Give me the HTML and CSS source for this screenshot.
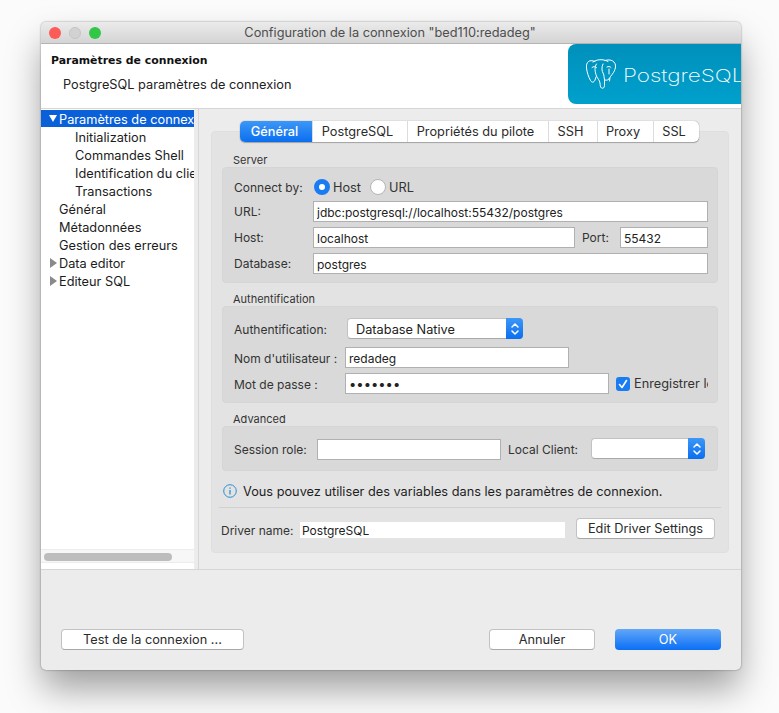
FILE: index.html
```html
<!DOCTYPE html>
<html lang="fr">
<head>
    <meta charset="UTF-8">
    <title>Configuration de la connexion</title>
    <link rel="stylesheet" href="styles.css">
</head>
<body>
    <div class="window">
        <div class="titlebar">
            <div class="lights">
                <span class="light red"></span>
                <span class="light gray"></span>
                <span class="light green"></span>
            </div>
            <div class="title">Configuration de la connexion "bed110:redadeg"</div>
        </div>

        <div class="header">
            <div class="header-text">
                <div class="header-title">Paramètres de connexion</div>
                <div class="header-sub">PostgreSQL paramètres de connexion</div>
            </div>
            <div class="logo">
                <svg class="elephant" width="31" height="31" viewBox="0 0 31 31" fill="none" stroke="#fff" stroke-width="1" stroke-linecap="round" stroke-linejoin="round">
                    <path d="M9 2.500C3 0 0 3 .5 9c.4 4 2 9 4 12.500 1.500 2.500 3.500 2 4.500-.5l1-3"/>
                    <path d="M7 3c3-2.500 10-3.500 15-.5"/>
                    <path d="M19 1.500C25-.5 30 2.500 29.500 8c-.4 4-3 7-5 9.500-1 1.500-.5 3-1 4.500"/>
                    <path d="M10.500 5C8 8 9 13 10.500 17c1 2.500 3 4 3.500 7 .3 2 0 4 1.500 5 1.800.8 3-.5 3-2.500V21c2.500.5 4.500 0 5-2"/>
                    <path d="M17 5c-1.500 3-1.500 7 .5 10 .5 1 .5 3 1 6"/>
                    <path d="M6 8.500c1.500-1.500 3.500-1 4.500 0M21 8c1.500-1 3-.5 4 .5M23 10v5"/>
                </svg>
                <span class="logo-text">PostgreSQL</span>
            </div>
        </div>

        <div class="main">
            <div class="tree-pane">
                <ul class="tree">
                    <li class="selected"><span class="arrow down"></span>Paramètres de connexion</li>
                    <li class="child">Initialization</li>
                    <li class="child">Commandes Shell</li>
                    <li class="child">Identification du client</li>
                    <li class="child">Transactions</li>
                    <li>Général</li>
                    <li>Métadonnées</li>
                    <li>Gestion des erreurs</li>
                    <li><span class="arrow right"></span>Data editor</li>
                    <li><span class="arrow right"></span>Editeur SQL</li>
                </ul>
                <div class="hscroll"><div class="hthumb"></div></div>
            </div>

            <div class="content">
                <div class="tabs">
                    <div class="tab active t1">Général</div>
                    <div class="tab t2">PostgreSQL</div>
                    <div class="tab t3">Propriétés du pilote</div>
                    <div class="tab t4">SSH</div>
                    <div class="tab t5">Proxy</div>
                    <div class="tab t6">SSL</div>
                </div>
                <div class="panel">
                    <div class="legend">Server</div>
                    <div class="group group-server">
                        <div class="row row-radio">
                            <label class="lab lab-server">Connect by:</label>
                            <span class="radio on"></span><span class="radio-text">Host</span>
                            <span class="radio"></span><span class="radio-text">URL</span>
                        </div>
                        <div class="row">
                            <label class="lab lab-server">URL:</label>
                            <input class="field grow" type="text" value="jdbc:postgresql://localhost:55432/postgres">
                        </div>
                        <div class="row">
                            <label class="lab lab-server">Host:</label>
                            <input class="field grow" type="text" value="localhost">
                            <label class="lab lab-port">Port:</label>
                            <input class="field port" type="text" value="55432">
                        </div>
                        <div class="row">
                            <label class="lab lab-server">Database:</label>
                            <input class="field grow" type="text" value="postgres">
                        </div>
                    </div>

                    <div class="legend">Authentification</div>
                    <div class="group group-auth">
                        <div class="row row-select">
                            <label class="lab lab-auth-type">Authentification:</label>
                            <div class="select select-auth">
                                <span class="select-value">Database Native</span>
                                <span class="stepper">
                                    <svg width="10" height="14" viewBox="0 0 10 14" fill="none" stroke="#fff" stroke-width="1.500" stroke-linecap="round" stroke-linejoin="round"><path d="M2 5l3-3 3 3M2 9l3 3 3-3"/></svg>
                                </span>
                            </div>
                        </div>
                        <div class="row">
                            <label class="lab lab-auth">Nom d'utilisateur :</label>
                            <input class="field user" type="text" value="redadeg">
                        </div>
                        <div class="row">
                            <label class="lab lab-auth">Mot de passe :</label>
                            <input class="field pass" type="password" value="redadeg">
                            <span class="check">
                                <svg width="14" height="14" viewBox="0 0 14 14" fill="none" stroke="#fff" stroke-width="1.600" stroke-linecap="round" stroke-linejoin="round"><path d="M3.500 7.500l2.500 3 4.500-7"/></svg>
                            </span>
                            <span class="check-text">Enregistrer le mot de passe</span>
                        </div>
                    </div>

                    <div class="legend">Advanced</div>
                    <div class="group group-adv">
                        <div class="row">
                            <label class="lab lab-role">Session role:</label>
                            <input class="field role" type="text">
                            <label class="lab lab-client">Local Client:</label>
                            <div class="select select-client">
                                <span class="select-value"></span>
                                <span class="stepper">
                                    <svg width="10" height="14" viewBox="0 0 10 14" fill="none" stroke="#fff" stroke-width="1.500" stroke-linecap="round" stroke-linejoin="round"><path d="M2 5l3-3 3 3M2 9l3 3 3-3"/></svg>
                                </span>
                            </div>
                        </div>
                    </div>

                    <div class="info">
                        <svg width="14" height="14" viewBox="0 0 14 14" fill="none" stroke="#2a8fd0"><circle cx="7" cy="7" r="6.300"/><path d="M7 6v4.500" stroke-width="1.300"/><path d="M7 3.500v1.200" stroke-width="1.300"/></svg>
                        <span>Vous pouvez utiliser des variables dans les paramètres de connexion.</span>
                    </div>

                    <div class="driver">
                        <span class="driver-label">Driver name:</span>
                        <span class="driver-name">PostgreSQL</span>
                        <button class="btn btn-driver" type="button">Edit Driver Settings</button>
                    </div>
                </div>
            </div>
        </div>

        <div class="footer">
            <button class="btn btn-test" type="button">Test de la connexion ...</button>
            <button class="btn btn-cancel" type="button">Annuler</button>
            <button class="btn btn-ok" type="button">OK</button>
        </div>
    </div>
</body>
</html>
```

FILE: styles.css
```css
* {
    box-sizing: border-box;
}

html, body {
    height: 100%;
}

body {
    margin: 0;
    padding: 22px 38px 0 41px;
    background-color: #fbfbfb;
    font-family: Inter, "Liberation Sans", sans-serif;
    font-size: 12.750px;
    color: #2b2b2b;
    overflow: hidden;
}

.window {
    width: 700px;
    height: 648px;
    background-color: #ececec;
    border-radius: 5px;
    box-shadow: 0 20px 36px -2px rgba(0, 0, 0, 0.38), 0 0 2px rgba(0, 0, 0, 0.45);
    display: flex;
    flex-direction: column;
    overflow: hidden;
}

/* title bar */
.titlebar {
    height: 22px;
    flex: none;
    display: flex;
    align-items: center;
    background: linear-gradient(#ebebeb, #d4d4d4);
    border-bottom: 1px solid #b4b4b4;
}

.lights {
    display: flex;
    gap: 8px;
    padding-left: 8px;
}

.light {
    width: 12px;
    height: 12px;
    border-radius: 50%;
}

.red {
    background-color: #fc5b57;
}

.gray {
    background-color: #d2d2d2;
    border: 1px solid #c4c4c4;
}

.green {
    background-color: #33c748;
}

.title {
    flex: 1;
    text-align: center;
    margin-left: -62px;
    color: #4e4e4e;
    font-size: 12.750px;
}

/* header */
.header {
    height: 65px;
    flex: none;
    display: flex;
    justify-content: space-between;
    background-color: #fff;
    border-bottom: 1px solid #d6d6d6;
}

.header-title {
    font-family: "DejaVu Sans", sans-serif;
    font-weight: bold;
    font-size: 10.900px;
    color: #111;
    padding: 10px 0 0 10px;
}

.header-sub {
    padding: 10px 0 0 22px;
    color: #222;
}

.logo {
    width: 173px;
    height: 60px;
    display: flex;
    align-items: center;
    padding-left: 18px;
    background: linear-gradient(#0090bb, #00a0cd);
    border-radius: 8px 0 0 8px;
    overflow: hidden;
    color: #fff;
}

.elephant {
    flex: none;
    margin-top: 1px;
}

.logo-text {
    font-family: Inter, sans-serif;
    font-weight: 200;
    font-size: 18px;
    margin-left: 6px;
    margin-top: 2px;
    transform: scaleX(1.25);
    transform-origin: left center;
}

/* main area */
.main {
    flex: 1;
    min-height: 0;
    display: flex;
    border-bottom: 1px solid #d6d6d6;
}

.tree-pane {
    width: 158px;
    flex: none;
    display: flex;
    flex-direction: column;
    padding-right: 4px;
    padding-bottom: 6px;
    background: linear-gradient(#fff, #fff) no-repeat left top / 153px 100%;
    border-right: 1px solid #d6d6d6;
}

.tree {
    flex: 1;
    list-style: none;
    margin: 0;
    padding: 1px 0 0;
    overflow: hidden;
}

.tree li {
    height: 18px;
    line-height: 20px;
    padding-left: 18px;
    white-space: nowrap;
    overflow: hidden;
    color: #1c1c1c;
    position: relative;
}

.tree li.child {
    padding-left: 34px;
}

.tree li.selected {
    height: 17px;
    line-height: 19px;
    margin-bottom: 1px;
    background-color: #0a60d8;
    color: #fff;
}

.arrow {
    position: absolute;
    width: 0;
    height: 0;
}

.arrow.down {
    left: 8px;
    top: 5px;
    border-left: 4.500px solid transparent;
    border-right: 4.500px solid transparent;
    border-top: 7px solid #fff;
}

.arrow.right {
    left: 9px;
    top: 4px;
    border-top: 5px solid transparent;
    border-bottom: 5px solid transparent;
    border-left: 7px solid #8a8a8a;
}

.hscroll {
    height: 14px;
    flex: none;
    padding: 3px;
    background-color: #f7f7f7;
    border-top: 1px solid #ececec;
    border-bottom: 1px solid #ececec;
}

.hthumb {
    width: 128px;
    height: 8px;
    border-radius: 4px;
    background-color: #bdbdbd;
}

/* right side */
.content {
    flex: 1;
    min-width: 0;
    padding: 12px 12px 0 12px;
}

.tabs {
    display: flex;
    width: 459px;
    height: 21px;
    margin-left: 29px;
    margin-bottom: -11px;
    position: relative;
    background-color: #fff;
    border-radius: 5px;
    box-shadow: 0 0 1px rgba(0, 0, 0, 0.5), 0 1px 1px rgba(0, 0, 0, 0.25);
    overflow: hidden;
}

.tab {
    line-height: 21px;
    text-align: center;
    padding-right: 5px;
    color: #2b2b2b;
    border-left: 1px solid #dcdcdc;
}

.tab.active {
    padding-right: 3px;
    border-left: 0;
    color: #fff;
    font-weight: 500;
    background: linear-gradient(#3d97f7, #0a6ff0);
}

.t1 { width: 72px; }
.t2 { width: 95px; }
.t3 { width: 141px; }
.t4 { width: 49px; }
.t5 { width: 56px; }
.t6 { width: 46px; }

.panel {
    width: 518px;
    height: 422px;
    padding: 18px 10px 0;
    background-color: #e3e3e3;
    border: 1px solid #dfdfdf;
    border-radius: 4px;
}

.legend {
    height: 17px;
    line-height: 20px;
    padding-left: 11px;
    font-size: 11px;
    color: #333;
}

.group {
    background-color: #d9d9d9;
    border: 1px solid #d5d5d5;
    border-radius: 4px;
    padding: 0 9px 0 11px;
    margin-bottom: 6px;
}

.group-server {
    height: 116px;
    padding-top: 8px;
}

.group-auth {
    height: 97px;
    padding-top: 11px;
}

.group-adv {
    height: 45px;
    padding-top: 12px;
}

.row {
    display: flex;
    align-items: center;
    height: 21px;
    margin-bottom: 5px;
}

.row-radio {
    height: 22px;
    margin-bottom: 3px;
}

.row-select {
    margin-bottom: 8px;
}

.lab {
    flex: none;
    color: #333;
    font-size: 12px;
    white-space: nowrap;
}

.lab-server { width: 79px; }
.lab-auth-type { width: 113px; padding-top: 2px; }
.lab-auth { width: 111px; padding-top: 2px; }
.lab-role { width: 83px; }
.lab-port { width: 38px; margin-left: 7px; }
.lab-client { width: 83px; margin-left: 7px; }

.field {
    height: 21px;
    padding: 1px 2px 0 3px;
    border: 1px solid #b0b0b0;
    border-radius: 0;
    background-color: #fff;
    font-family: inherit;
    font-size: 12px;
    color: #222;
    outline: none;
    min-width: 0;
}

.grow { flex: 1; }
.port { width: 88px; flex: none; }
.user { width: 224px; flex: none; }
.pass { width: 264px; flex: none; font-size: 13px; }
.role { width: 184px; flex: none; }

.radio {
    width: 16px;
    height: 16px;
    flex: none;
    border-radius: 50%;
    background-color: #fff;
    border: 1px solid #b5b5b5;
    margin-left: 1px;
}

.radio.on {
    background-color: #fff;
    border: 5px solid #1a7cf2;
}

.radio-text {
    margin: 0 8px 0 3px;
    color: #333;
}

.select {
    display: flex;
    height: 21px;
    background-color: #fff;
    border: 1px solid #c2c2c2;
    border-bottom-color: #a8a8a8;
    border-radius: 4px;
}

.select-auth { width: 176px; }
.select-client { width: 114px; margin-top: -2px; }

.select-value {
    flex: 1;
    line-height: 21px;
    padding-left: 8px;
    color: #222;
}

.stepper {
    width: 17px;
    flex: none;
    margin: -1px -1px -1px 0;
    display: flex;
    align-items: center;
    justify-content: center;
    border-radius: 0 4px 4px 0;
    background: linear-gradient(#3d97f7, #0a6ff0);
}

.check {
    width: 14px;
    height: 14px;
    flex: none;
    margin-left: 7px;
    border-radius: 3px;
    background-color: #1a7cf2;
    display: flex;
}

.check-text {
    flex: 1;
    min-width: 0;
    margin-left: 4px;
    overflow: hidden;
    white-space: nowrap;
    color: #333;
}

.info {
    display: flex;
    align-items: center;
    gap: 6px;
    height: 30px;
    padding: 0 0 2px 1px;
    color: #1e1e1e;
}

.driver {
    display: flex;
    align-items: center;
    height: 42px;
    margin: 0 -3px;
    border-top: 1px solid #d0d0d0;
    padding: 0 6px 0 2px;
}

.driver-label {
    width: 79px;
    flex: none;
    margin-top: 3px;
    font-size: 12px;
    color: #333;
}

.driver-name {
    width: 265px;
    flex: none;
    height: 16px;
    margin-top: 3px;
    line-height: 17px;
    padding-left: 2px;
    font-size: 12px;
    background-color: #fff;
    color: #222;
}

/* buttons */
.btn {
    height: 21px;
    padding: 0;
    border: 1px solid #c2c2c2;
    border-bottom-color: #a8a8a8;
    border-radius: 4px;
    background-color: #fff;
    font-family: inherit;
    font-size: 12.750px;
    color: #2b2b2b;
}

.btn-driver {
    width: 139px;
    margin-left: 11px;
}

.footer {
    height: 100px;
    flex: none;
    display: flex;
    align-items: flex-start;
    padding: 59px 20px 0;
}

.btn-test {
    width: 183px;
    margin-right: auto;
}

.btn-cancel {
    width: 106px;
}

.btn-ok {
    width: 106px;
    margin-left: 20px;
    color: #fff;
    border: 0;
    background: linear-gradient(#62a7f8, #0a6ff5);
}
```
